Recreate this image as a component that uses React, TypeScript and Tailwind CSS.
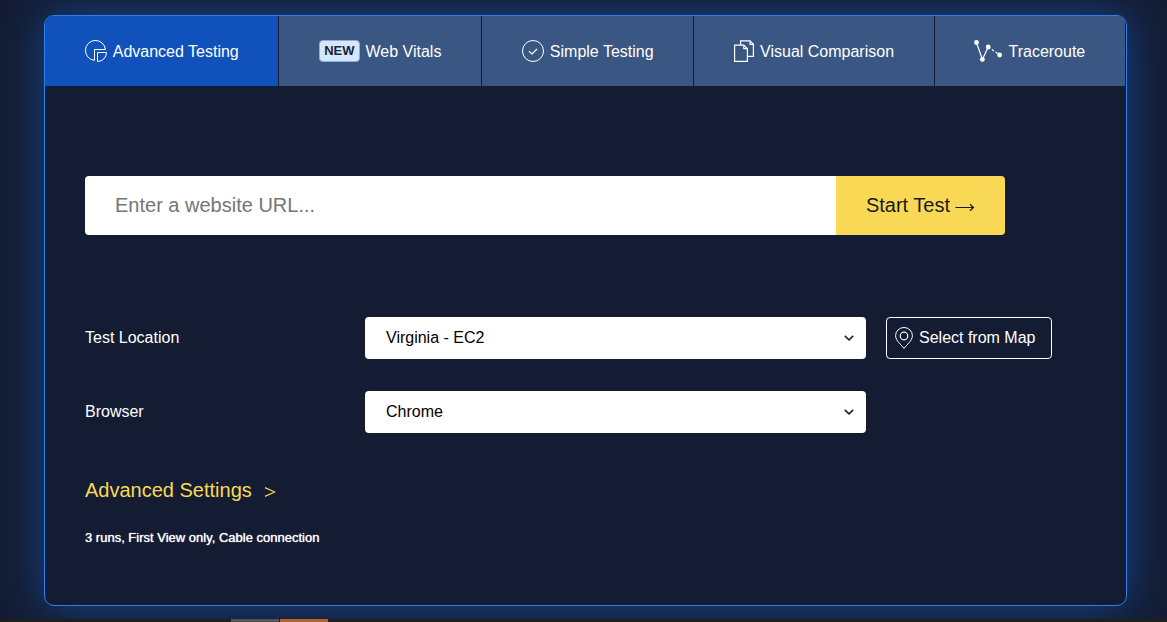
import { useState } from 'react'
import type { ReactNode } from 'react'

type Tab = {
  label: string
  icon: ReactNode
}

function PieIcon() {
  return (
    <svg width="22" height="22" viewBox="0 0 22 22" fill="none" stroke="currentColor" strokeWidth="1" aria-hidden="true">
      <path d="M20.4 9.5A10 10 0 1 0 9.5 20.4V9.5Z" />
      <path d="M12.5 12.5h9a9 9 0 0 1-9 9Z" />
    </svg>
  )
}

function CheckIcon() {
  return (
    <svg width="22" height="22" viewBox="0 0 22 22" fill="none" stroke="currentColor" aria-hidden="true">
      <circle cx="11" cy="11" r="10.5" />
      <path d="m7 11.3 3 2.7 5-5" strokeWidth="1.2" />
    </svg>
  )
}

function PagesIcon() {
  return (
    <svg width="20" height="22" viewBox="0 0 20 22" fill="none" stroke="currentColor" strokeWidth="1.2" aria-hidden="true">
      <path d="M.6 5.1h9.2l3.6 3.6v12.7H.6Z" />
      <path d="M9.8 5.1v3.6h3.6" />
      <path d="M6.6 5V.9h9.400L19.4 4.300v12.100h-6" />
      <path d="M16 .9v3.400h3.400" />
    </svg>
  )
}

function TraceIcon() {
  return (
    <svg width="28" height="22" viewBox="0 0 28 22" fill="currentColor" stroke="currentColor" aria-hidden="true">
      <path d="M2.4 2.5 8.4 19.4 14.2 7" fill="none" strokeWidth="1.2" />
      <path d="M14.2 7 25.8 15" fill="none" strokeWidth="1.2" strokeDasharray="2.5 2" />
      <g stroke="none">
        <circle cx="2.5" cy="2.5" r="2.4" />
        <circle cx="8.4" cy="19.4" r="2.4" />
        <circle cx="14.2" cy="7" r="2.4" />
        <circle cx="25.6" cy="15" r="2.4" />
      </g>
    </svg>
  )
}

function PinIcon() {
  return (
    <svg width="18" height="22" viewBox="0 0 18 22" fill="none" stroke="currentColor" aria-hidden="true">
      <path d="M9 21.4C6 17.6.6 13.4.6 8.7a8.4 8.2 0 0 1 16.8 0c0 4.7-5.4 8.9-8.4 12.7Z" />
      <circle cx="9" cy="9" r="3.8" strokeWidth="1.2" />
    </svg>
  )
}

function ArrowIcon() {
  return (
    <svg width="20" height="10" viewBox="0 0 20 10" fill="none" stroke="currentColor" aria-hidden="true">
      <path d="M.5 5.5H18" strokeWidth="1" />
      <path d="M15 2.200 18.5 5.500 15 8.800" strokeWidth="1.200" />
    </svg>
  )
}

const tabs: Tab[] = [
  { label: 'Advanced Testing', icon: <PieIcon /> },
  {
    label: 'Web Vitals',
    icon: (
      <span className="rounded border border-[#93add0] bg-[#d4e8ff] px-1 text-[13px] leading-5 font-bold text-[#1d2433]">
        NEW
      </span>
    ),
  },
  { label: 'Simple Testing', icon: <CheckIcon /> },
  { label: 'Visual Comparison', icon: <PagesIcon /> },
  { label: 'Traceroute', icon: <TraceIcon /> },
]

type SelectProps = {
  id: string
  label: string
  options: string[]
  children?: ReactNode
}

function SelectRow({ id, label, options, children }: SelectProps) {
  return (
    <div className="flex items-center">
      <label htmlFor={id} className="w-[280px] shrink-0">
        {label}
      </label>
      <div className="relative max-w-[501px] flex-1">
        <select
          id={id}
          className="block h-[42px] w-full appearance-none rounded bg-white pr-10 pl-[21px] text-base text-black"
        >
          {options.map(option => (
            <option key={option}>{option}</option>
          ))}
        </select>
        <svg
          className="pointer-events-none absolute top-1/2 right-3 -translate-y-1/2 text-[#222]"
          width="10"
          height="6"
          viewBox="0 0 10 6"
          fill="none"
          stroke="currentColor"
          strokeWidth="1.6"
          aria-hidden="true"
        >
          <path d="m.8.8 4.2 4 4.2-4" />
        </svg>
      </div>
      {children}
    </div>
  )
}

export default function App() {
  const [active, setActive] = useState('Advanced Testing')
  const [url, setUrl] = useState('')

  return (
    <div className="flex min-h-screen flex-col bg-[#131c33] font-['Liberation_Sans',Arial,sans-serif] text-base text-white">
      <main className="flex-1 overflow-hidden pt-[15px] pr-10 pb-[13px] pl-11">
        <div className="overflow-hidden rounded-[10px] border border-[#2f80ed] bg-[#131c33] shadow-[0_0_45px_rgba(31,111,225,0.5)]">
          <nav className="flex h-[70px]">
            {tabs.map(tab => (
              <button
                key={tab.label}
                type="button"
                onClick={() => setActive(tab.label)}
                className={`flex flex-auto items-center justify-center gap-1.5 border-r border-[#131c33] px-[38px] whitespace-nowrap ${
                  tab.label === active ? 'bg-[#1151bb]' : 'bg-[#3a5683]'
                }`}
              >
                {tab.icon}
                <span className="pt-px">{tab.label}</span>
              </button>
            ))}
          </nav>

          <div className="px-10 pt-[90px] pb-[57px]">
            <form
              className="flex h-[59px] max-w-[920px] overflow-hidden rounded text-xl"
              onSubmit={e => e.preventDefault()}
            >
              <input
                type="text"
                aria-label="Website URL"
                placeholder="Enter a website URL..."
                value={url}
                onChange={e => setUrl(e.target.value)}
                className="min-w-0 flex-1 bg-white px-[30px] pb-0.5 text-black placeholder:text-[#757575]"
              />
              <button
                type="submit"
                className="flex items-center gap-[5px] bg-[#f9d856] px-[30px] pb-0.5 whitespace-nowrap text-[#1a1a1a]"
              >
                Start Test
                <span className="pt-1">
                  <ArrowIcon />
                </span>
              </button>
            </form>

            <div className="mt-[82px] space-y-8">
              <SelectRow id="location" label="Test Location" options={['Virginia - EC2']}>
                <button
                  type="button"
                  className="ml-5 flex h-[42px] items-center gap-1.5 rounded border border-white pr-4 pl-2 whitespace-nowrap"
                >
                  <PinIcon />
                  Select from Map
                </button>
              </SelectRow>
              <SelectRow id="browser" label="Browser" options={['Chrome']} />
            </div>

            <button type="button" className="mt-[43px] flex items-center gap-3 text-xl text-[#f9d856]">
              Advanced Settings
              <svg
                className="mt-1"
                width="12"
                height="10"
                viewBox="0 0 12 10"
                fill="none"
                stroke="currentColor"
                strokeWidth="1.2"
                aria-hidden="true"
              >
                <path d="m1 .6 9.800 4.400L1 9.400" />
              </svg>
            </button>
            <p className="mt-6 text-[13px] leading-5 text-shadow-[0_0_1px_white]">
              3 runs, First View only, Cable connection
            </p>
          </div>
        </div>
      </main>
      <footer className="flex h-[3px] gap-px bg-[#1f1f1f] pl-[231px]">
        <div className="w-12 bg-[#555]" />
        <div className="w-12 bg-[#b5642c]" />
      </footer>
    </div>
  )
}
